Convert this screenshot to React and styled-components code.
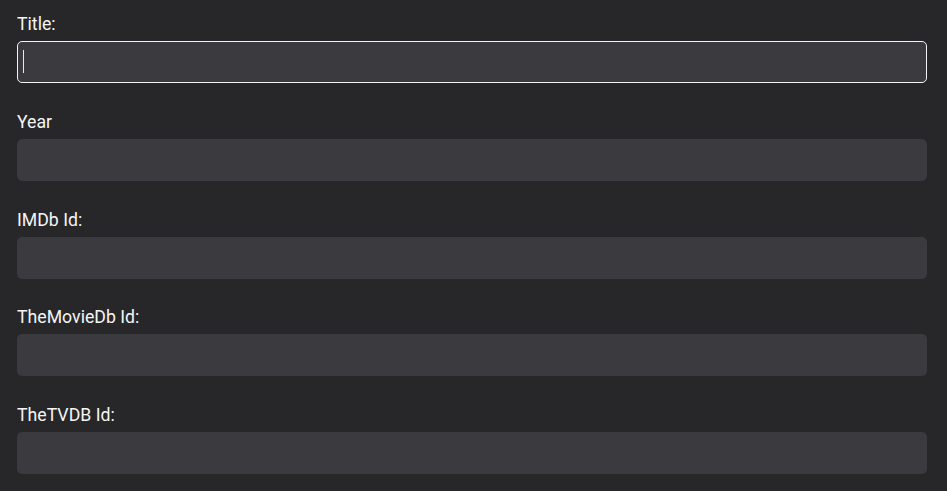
import React from 'react'
import styled, { createGlobalStyle } from 'styled-components'

const Global = createGlobalStyle`
  html, body {
    margin: 0;
    background: #27272a;
    font-family: Roboto, 'Liberation Sans', sans-serif;
  }
`

const Form = styled.form`
  display: flex;
  flex-direction: column;
  gap: 26.75px;
  padding: 12px 20px 20px 17px;
`

const Field = styled.div`
  display: flex;
  flex-direction: column;
`

const Label = styled.label`
  color: #f5f5f5;
  font-size: 17.7px;
  line-height: 24px;
  margin-bottom: 5px;
`

const InputWrap = styled.div`
  position: relative;
`

const Input = styled.input`
  box-sizing: border-box;
  width: 100%;
  height: 42px;
  padding: 0 5px;
  border-radius: 5px;
  border: 1px solid ${(p) => (p.$focused ? '#f4f4f4' : 'transparent')};
  background: #3a3a3f;
  color: #fff;
  font-family: inherit;
  font-size: 18px;
  outline: none;
  caret-color: transparent;
`

const Caret = styled.span`
  position: absolute;
  left: 6px;
  top: 9px;
  width: 1px;
  height: 23px;
  background: #e8e8e8;
`

const fields = [
  { id: 'title', label: 'Title:', focused: true },
  { id: 'year', label: 'Year' },
  { id: 'imdb', label: 'IMDb Id:' },
  { id: 'tmdb', label: 'TheMovieDb Id:' },
  { id: 'tvdb', label: 'TheTVDB Id:' },
]

const App = () => {
  return (
    <>
      <Global />
      <Form onSubmit={(e) => e.preventDefault()}>
        {fields.map((f) => (
          <Field key={f.id}>
            <Label htmlFor={f.id}>{f.label}</Label>
            <InputWrap>
              <Input id={f.id} type='text' $focused={f.focused} />
              {f.focused && <Caret />}
            </InputWrap>
          </Field>
        ))}
      </Form>
    </>
  )
}

export default App
